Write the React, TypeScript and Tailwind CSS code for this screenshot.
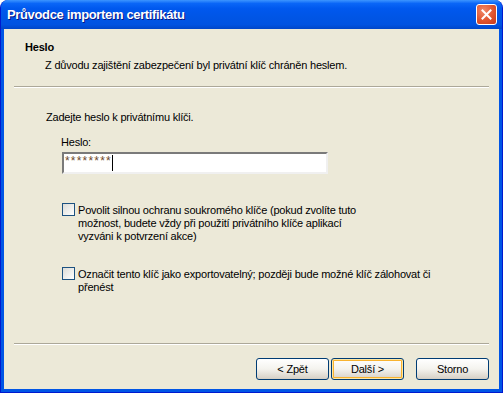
import React from "react";

const font = "font-['Liberation_Sans',Arial,sans-serif]";

const XpButton: React.FC<{ label: string; isDefault?: boolean }> = ({ label, isDefault }) => (
  <button
    className={`w-[73px] h-[22px] rounded-[3px] border border-[#003C74] bg-gradient-to-b from-[#FFFFFF] via-[#F4F3EE] to-[#D6D0C5] text-[11px] tracking-[-0.2px] text-black flex items-center justify-center ${
      isDefault ? "shadow-[inset_0_0_0_1px_#FFE7A2,inset_0_0_0_2px_#F8B330]" : "shadow-[inset_0_-1px_0_#D6D0C5]"
    }`}
  >
    {label}
  </button>
);

const Checkbox: React.FC = () => (
  <span className="block w-[13px] h-[13px] shrink-0 border border-[#1C5180] bg-gradient-to-br from-[#DCDCD7] to-[#FFFFFF]" />
);

export default function App() {
  return (
    <div className={`w-[503px] h-[393px] bg-white ${font}`}>
      <div className="w-full h-full flex flex-col rounded-t-[8px] bg-[#0055E5] border-x border-b border-[#0019CF] overflow-hidden">
        {/* Titulek */}
        <div className="h-[29px] shrink-0 flex items-center justify-between pl-[6px] pr-[5px] bg-[linear-gradient(to_bottom,#3D95FF_0%,#0A66F7_12%,#0058EE_30%,#0055E5_60%,#0053E1_85%,#0046C8_100%)]">
          <span className="text-white font-bold text-[13px] tracking-[-0.35px] [text-shadow:1px_1px_0_#0A1883]">
            Průvodce importem certifikátu
          </span>
          <button className="w-[21px] h-[21px] rounded-[3px] border border-white bg-[radial-gradient(circle_at_35%_30%,#F08A6A_0%,#E0542E_55%,#C6391B_100%)] flex items-center justify-center">
            <svg width="11" height="11" viewBox="0 0 11 11">
              <path d="M1.5 1.5 L9.5 9.5 M9.5 1.5 L1.5 9.5" stroke="white" strokeWidth="2" strokeLinecap="square" />
            </svg>
          </button>
        </div>

        {/* Obsah */}
        <div className="flex-1 mx-[3px] mb-[3px] bg-[#ECE9D8] flex flex-col text-[11px] leading-[13px] tracking-[-0.2px] text-black">
          <div className="pt-[12px] pl-[21px]">
            <div className="font-bold">Heslo</div>
            <div className="pl-[20px] mt-[5px]">Z důvodu zajištění zabezpečení byl privátní klíč chráněn heslem.</div>
          </div>
          <div className="mx-[10px] mt-[14px] h-[2px] border-t border-[#ACA899] border-b border-b-white" />

          <div className="flex-1 flex flex-col pl-[42px]">
            <div className="mt-[23px]">Zadejte heslo k privátnímu klíči.</div>
            <div className="mt-[12px] pl-[15px]">Heslo:</div>
            <div className="mt-[3px] ml-[16px] w-[266px] h-[22px] bg-white border-2 border-t-[#7A7A7A] border-l-[#7A7A7A] border-r-[#F0F0F0] border-b-[#F0F0F0] flex items-center pl-[1px]">
              <span className="text-[12px] text-[#6E4A2C] tracking-[1.2px] -mt-[3px]">********</span>
              <span className="w-[1px] h-[16px] bg-black" />
            </div>

            <div className="mt-[29px] ml-[16px] flex items-start gap-[3px]">
              <Checkbox />
              <div className="mt-[1px]">
                Povolit silnou ochranu soukromého klíče (pokud zvolíte tuto
                <br />
                možnost, budete vždy při použití privátního klíče aplikací
                <br />
                vyzváni k potvrzení akce)
              </div>
            </div>

            <div className="mt-[24px] ml-[16px] flex items-start gap-[3px]">
              <Checkbox />
              <div className="mt-[1px]">
                Označit tento klíč jako exportovatelný; později bude možné klíč zálohovat či
                <br />
                přenést
              </div>
            </div>
          </div>

          <div className="mx-[10px] h-[2px] border-t border-[#ACA899] border-b border-b-white" />
          <div className="flex justify-end items-center pr-[10px] mt-[13px] mb-[9px]">
            <XpButton label="< Zpět" />
            <div className="ml-[2px]">
              <XpButton label="Další >" isDefault />
            </div>
            <div className="ml-[12px]">
              <XpButton label="Storno" />
            </div>
          </div>
        </div>
      </div>
    </div>
  );
}
